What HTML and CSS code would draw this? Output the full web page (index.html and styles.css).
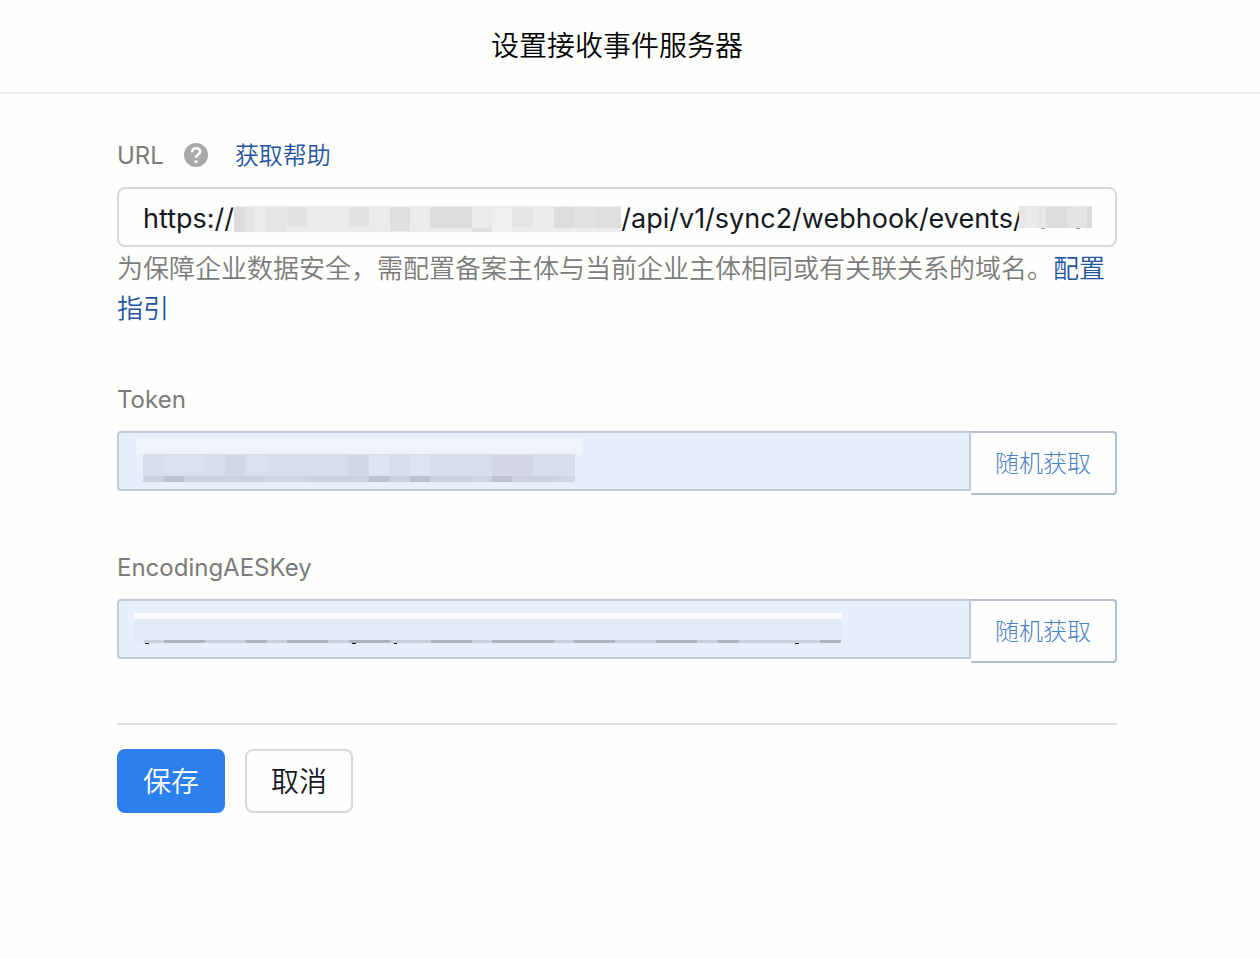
FILE: index.html
```html
<!DOCTYPE html>
<html lang="zh-CN">

<head>
  <meta charset="UTF-8" />
  <meta name="viewport" content="width=device-width, initial-scale=1.0" />
  <title>设置接收事件服务器</title>
  <link rel="stylesheet" href="styles.css">
</head>

<body>
  <header class="page-header">
    <h1>设置接收事件服务器</h1>
  </header>

  <form class="server-form">
    <div class="field">
      <div class="label-row">
        <label for="url">URL</label>
        <svg class="help-icon" viewBox="0 0 24 24" aria-hidden="true">
          <circle cx="12" cy="12" r="12" fill="#a9a9a8" />
          <path d="M8.2 9.3C8.2 6.7 9.8 5.2 12.1 5.2s4 1.4 4 3.5c0 2.8-3.9 3-3.9 6" fill="none" stroke="#fff" stroke-width="2.6" />
          <circle cx="12.1" cy="18.6" r="1.7" fill="#fff" />
        </svg>
        <a href="#" class="help-link">获取帮助</a>
      </div>
      <div class="input-wrap">
        <input type="text" id="url" value="https://                                                   /api/v1/sync2/webhook/events/" />
        <!-- masked host -->
        <svg class="mask mask-host" viewBox="0 0 387 26" preserveAspectRatio="none" aria-hidden="true">
          <rect width="387" height="26" fill="#ececec" />
          <path d="M0 1h12v25H0z" fill="#dcdcdc" />
          <path d="M12 1h9v25h-9zM32 1h20v25H32z" fill="#e5e5e5" />
          <path d="M53 1h20v20H53zM115 1h20v20h-20z" fill="#e2e2e2" />
          <path d="M156 1h20v24h-20z" fill="#dfdfdf" />
          <path d="M196 1h42v21h-42z" fill="#dcdcdc" />
          <path d="M238 22h20v4h-20z" fill="#e0e0e0" />
          <path d="M258 1h20v25h-20z" fill="#efefef" />
          <path d="M278 1h21v20h-21z" fill="#e4e6e6" />
          <path d="M320 1h20v21h-20z" fill="#dcdcdc" />
          <path d="M340 1h21v21h-21z" fill="#e2e2e1" />
          <path d="M361 1h26v21h-26z" fill="#dddfdf" />
        </svg>
        <!-- masked id -->
        <svg class="mask mask-id" viewBox="0 0 73 24" preserveAspectRatio="none" aria-hidden="true">
          <rect width="73" height="22" fill="#e6e6e6" />
          <path d="M6 1h12v21H6z" fill="#ebebeb" />
          <path d="M27 1h21v21H27z" fill="#dcdcdc" />
          <path d="M48 1h20v21H48z" fill="#e4e4e4" />
          <path d="M68 1h5v21h-5z" fill="#dadada" />
          <path d="M22 22h4v1h-4zM57 22h4v1h-4z" fill="#999" />
        </svg>
      </div>
      <p class="hint">为保障企业数据安全，需配置备案主体与当前企业主体相同或有关联关系的域名。<a href="#">配置指引</a></p>
    </div>

    <div class="field">
      <div class="label-row">
        <label for="token">Token</label>
      </div>
      <div class="input-group">
        <div class="input-wrap">
          <input type="text" id="token" class="autofill" />
          <svg class="mask mask-token" viewBox="0 0 446 44" preserveAspectRatio="none" aria-hidden="true">
            <rect width="446" height="16" fill="#f0f3fa" />
            <rect x="7" y="16" width="432" height="28" fill="#d7dde9" />
            <path d="M28 17h41v20H28zM110 17h20v20h-20z" fill="#dae0ed" />
            <path d="M89 17h20v20H89zM212 17h21v20h-21z" fill="#d1d7e3" />
            <path d="M233 17h20v20h-20zM274 17h20v20h-20z" fill="#dee4f0" />
            <path d="M356 17h41v20h-41z" fill="#d2d7e3" />
            <path d="M7 38h432v6H7z" fill="#cdd2df" />
            <path d="M28 38h20v6H28zM233 38h20v6h-20zM274 38h20v6h-20zM356 38h20v6h-20z" fill="#bcc2ce" />
            <path d="M130 38h42v6h-42zM335 38h21v6h-21zM417 38h22v6h-22z" fill="#d0d5e2" />
          </svg>
        </div>
        <button type="button" class="random-button">随机获取</button>
      </div>
    </div>

    <div class="field">
      <div class="label-row">
        <label for="aesKey">EncodingAESKey</label>
      </div>
      <div class="input-group">
        <div class="input-wrap">
          <input type="text" id="aesKey" class="autofill" />
          <svg class="mask mask-key" viewBox="0 0 708 32" preserveAspectRatio="none" aria-hidden="true">
            <rect width="708" height="30" fill="#e4eaf7" />
            <rect width="708" height="6" fill="#fafafa" />
            <rect x="10" y="27" width="697" height="3" fill="#c8cedb" />
            <path d="M30 27h41v3H30zM112 27h21v3h-21zM153 27h41v3h-41zM215 27h41v3h-41zM297 27h41v3h-41zM358 27h62v3h-62zM440 27h41v3h-41zM522 27h41v3h-41zM584 27h21v3h-21zM686 27h21v3h-21z" fill="#afb4c0" />
            <path d="M11 30h4v1h-4zM218 30h4v1h-4zM260 30h3v1h-3zM661 30h4v1h-4z" fill="#111" />
          </svg>
        </div>
        <button type="button" class="random-button">随机获取</button>
      </div>
    </div>

    <div class="actions">
      <button type="submit" class="button primary">保存</button>
      <button type="button" class="button">取消</button>
    </div>
  </form>
</body>

</html>
```
FILE: styles.css
```css
* {
  box-sizing: border-box;
}

body {
  margin: 0;
  font-family: Inter, "Noto Sans CJK SC", sans-serif;
  font-size: 24px;
  background-color: #fefefd;
  color: #15191e;
}

.page-header {
  padding: 25px 26px 25px 0;
  border-bottom: 2px solid #ebebeb;
}

h1 {
  margin: 0;
  font-size: 28px;
  font-weight: 350;
  line-height: 42px;
  text-align: center;
  color: #000;
}

a {
  color: #1f559f;
  text-decoration: none;
}

.server-form {
  padding: 41px 143px 40px 117px;
}

.field {
  margin-bottom: 52px;
}

.label-row {
  display: flex;
  align-items: center;
  height: 40px;
  margin-bottom: 12px;
  color: #7b7b7b;
}

.help-icon {
  width: 24px;
  height: 24px;
  margin: 0 27px 0 20px;
}

.help-link {
  padding-bottom: 4px;
  font-weight: 350;
}

.input-wrap {
  position: relative;
  flex: 1;
}

input {
  display: block;
  width: 100%;
  height: 60px;
  padding: 2px 24px 0;
  font-family: inherit;
  font-size: 27px;
  color: inherit;
  background-color: #fefefe;
  border: 2px solid #d9d9d9;
  border-radius: 8px;
}

.autofill {
  background-color: #e7eefc;
  border-color: #c3cbda;
  border-radius: 4px 0 0 4px;
}

/* mosaics lie over the private part of each value */
.mask {
  position: absolute;
}

.mask-host {
  left: 117px;
  top: 19px;
  width: 387px;
  height: 26px;
}

.mask-id {
  left: 902px;
  top: 19px;
  width: 73px;
  height: 24px;
}

.mask-token {
  left: 19px;
  top: 7px;
  width: 446px;
  height: 44px;
}

.mask-key {
  left: 17px;
  top: 14px;
  width: 708px;
  height: 32px;
}

.hint {
  margin: 0 0 -2px;
  padding-top: 2px;
  font-size: 26px;
  font-weight: 350;
  line-height: 40px;
  color: #7b7b7b;
}

.input-group {
  display: flex;
  align-items: flex-start;
}

button {
  height: 64px;
  padding: 0 24px 3px;
  font-family: inherit;
  font-weight: 350;
  border: 2px solid #d9d9d9;
  cursor: pointer;
}

.random-button {
  font-size: 24px;
  font-weight: 300;
  color: #4a7fc4;
  background-color: #fefefe;
  border-color: #b3bfcc;
  border-left: none;
  border-radius: 0 4px 4px 0;
}

.actions {
  display: flex;
  gap: 20px;
  margin-top: 60px;
  padding-top: 24px;
  border-top: 2px solid #e1e2e6;
}

.button {
  font-size: 28px;
  color: #15191e;
  background-color: #fefefe;
  border-radius: 8px;
}

.primary {
  color: #fff;
  background-color: #2b80ee;
  border-color: #2b80ee;
}
```
